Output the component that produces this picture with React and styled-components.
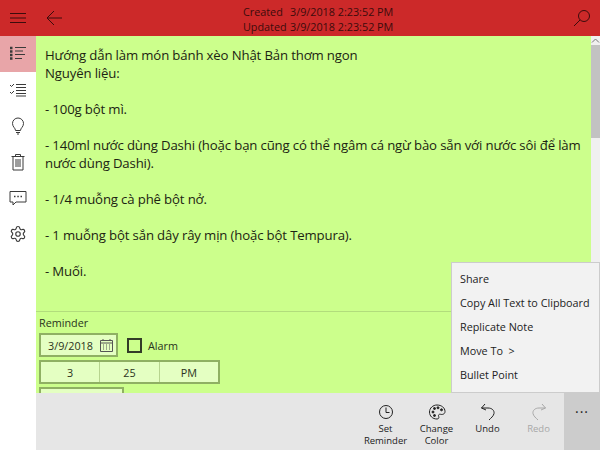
import React from "react";
import styled, { createGlobalStyle } from "styled-components";
import { Settings } from "lucide-react";

const GlobalStyle = createGlobalStyle`
  html, body {
    margin: 0;
    padding: 0;
    height: 100%;
    overflow: hidden;
  }
  *, *::before, *::after {
    box-sizing: border-box;
  }
  body {
    font-family: "Open Sans", "Noto Sans", sans-serif;
    color: #1a1a1a;
  }
`;

const noteLines = [
  "Hướng dẫn làm món bánh xèo Nhật Bản thơm ngon",
  "Nguyên liệu:",
  "",
  "- 100g bột mì.",
  "",
  "- 140ml nước dùng Dashi (hoặc bạn cũng có thể ngâm cá ngừ bào sẵn với nước sôi để làm nước dùng Dashi).",
  "",
  "- 1/4 muỗng cà phê bột nở.",
  "",
  "- 1 muỗng bột sắn dây rây mịn (hoặc bột Tempura).",
  "",
  "- Muối.",
];

const menuItems = ["Share", "Copy All Text to Clipboard", "Replicate Note", "Move To  >", "Bullet Point"];

const Icon = ({ size = 18, children }) => (
  <svg width={size} height={size} viewBox="0 0 18 18" fill="none" stroke="currentColor" strokeWidth="1">
    {children}
  </svg>
);

const App = () => {
  return (
    <>
      <GlobalStyle />
      <Page>
        <TopBar>
          <BarButton>
            <Icon>
              <path d="M1 4.500h16M1 9h16M1 13.500h16" />
            </Icon>
          </BarButton>
          <BarButton>
            <Icon>
              <path d="M2 9h15M9 2 2 9l7 7" />
            </Icon>
          </BarButton>
          <Stamps>
            <StampRow>
              <StampLabel>Created</StampLabel>3/9/2018 2:23:52 PM
            </StampRow>
            <StampRow>
              <StampLabel>Updated</StampLabel>3/9/2018 2:23:52 PM
            </StampRow>
          </Stamps>
          <BarButton>
            <Icon>
              <circle cx="11" cy="7" r="5.500" />
              <path d="M7 11 1 17" />
            </Icon>
          </BarButton>
        </TopBar>
        <Main>
          <SideNav>
            <NavItem $active>
              <Icon>
                <path d="M1 3h2.500M1 6.500h2.500M1 10h2.500M1 13.500h2.500" strokeWidth="2.400" />
                <path d="M6 2.500h11M6 6h8M6 9.500h10M6 13.500h7" />
              </Icon>
            </NavItem>
            <NavItem>
              <Icon>
                <path d="M1 4l1.500 1.500L5 3M1 11l1.500 1.500L5 10" />
                <path d="M7 3.500h10M7 6.500h10M7 9.500h10M7 12.500h10M7 15h10" />
              </Icon>
            </NavItem>
            <NavItem>
              <Icon>
                <path d="M6.500 13.500C6.500 11 3.500 10 3.500 6.500a5.500 5.500 0 0 1 11 0c0 3.500-3 4.500-3 7z" />
                <path d="M7 15.500h4M8 17h2" />
              </Icon>
            </NavItem>
            <NavItem>
              <Icon>
                <path d="M2.500 3.500h13M6.500 3.500V1.500h5v2M4 3.500V17h10V3.500M7 6v8M9 6v8M11 6v8" />
              </Icon>
            </NavItem>
            <NavItem>
              <Icon>
                <path d="M1 2.500h16v10.500H7l-3 3v-3H1z" />
                <path d="M5 7.500h1.500M8.300 7.500h1.500M11.500 7.500H13" strokeWidth="1.600" />
              </Icon>
            </NavItem>
            <NavItem>
              <Settings size={18} strokeWidth={1.500} />
            </NavItem>
          </SideNav>
          <Content>
            <NoteArea>
              <NoteText>
                {noteLines.map((line, i) => (
                  <NoteLine key={i}>{line || "\u00a0"}</NoteLine>
                ))}
              </NoteText>
              <ScrollTrack>
                <ScrollArrow>
                  <svg width="9" height="5" viewBox="0 0 9 5" fill="none" stroke="#777" strokeWidth="1">
                    <path d="M1 4.500 4.500 1 8 4.500" />
                  </svg>
                </ScrollArrow>
                <ScrollThumb />
              </ScrollTrack>
            </NoteArea>
            <ReminderPanel>
              <ReminderLabel>Reminder</ReminderLabel>
              <DateRow>
                <DateField>
                  3/9/2018
                  <svg width="13" height="13" viewBox="0 0 13 13" fill="none" stroke="#555" strokeWidth="1">
                    <path d="M.5 1.500h12v11H.5zM.5 4h12M3 0v2M10 0v2" />
                    <path d="M3 6h1M6 6h1M9 6h1M3 8h1M6 8h1M9 8h1M3 10h1M6 10h1M9 10h1" />
                  </svg>
                </DateField>
                <CheckBox />
                <AlarmLabel>Alarm</AlarmLabel>
              </DateRow>
              <TimeField>
                <TimeCell>3</TimeCell>
                <TimeCell>25</TimeCell>
                <TimeCell>PM</TimeCell>
              </TimeField>
              <CutOffField />
            </ReminderPanel>
          </Content>
        </Main>
        <CommandBar>
          <CommandButton>
            <Icon>
              <circle cx="9" cy="9" r="6.500" />
              <path d="M9 4.500V9.500h3.500" />
            </Icon>
            <CommandLabel>Set Reminder</CommandLabel>
          </CommandButton>
          <CommandButton>
            <Icon>
              <path d="M9 2c4.500 0 8 2.800 8 6.500 0 3-3 3.200-4.500 2.800-1.500-.4-2.500.8-1.800 2.200.6 1.400-.2 2.500-1.700 2.500C4.500 16 1.500 13 1.500 9 1.500 5 5 2 9 2z" />
              <circle cx="5" cy="9" r="1" fill="currentColor" />
              <circle cx="6.500" cy="5.500" r="1" fill="currentColor" />
              <circle cx="10" cy="4.800" r="1" fill="currentColor" />
              <circle cx="13.500" cy="6.800" r="1" fill="currentColor" />
              <circle cx="6.500" cy="12.500" r="1" fill="currentColor" />
            </Icon>
            <CommandLabel>Change Color</CommandLabel>
          </CommandButton>
          <CommandButton>
            <Icon>
              <path d="M6 1 2.500 5 7 7M2.500 5H9c4 0 6.500 2.500 6 5.500-.4 2.500-3 4.500-5 6.500" />
            </Icon>
            <CommandLabel>Undo</CommandLabel>
          </CommandButton>
          <CommandButton $disabled>
            <Icon>
              <path d="M12 1l3.500 4L11 7M15.500 5H9c-4 0-6.500 2.500-6 5.500.4 2.500 3 4.500 5 6.500" />
            </Icon>
            <CommandLabel>Redo</CommandLabel>
          </CommandButton>
          <MoreButton>···</MoreButton>
        </CommandBar>
        <PopupMenu>
          {menuItems.map((item) => (
            <MenuItem key={item}>{item}</MenuItem>
          ))}
        </PopupMenu>
      </Page>
    </>
  );
};

const Page = styled.div`
  position: relative;
  width: 600px;
  height: 450px;
  display: flex;
  flex-direction: column;
  overflow: hidden;
  background: #fff;
`;

const TopBar = styled.div`
  height: 36px;
  flex: none;
  display: flex;
  align-items: center;
  background: #cc2929;
  color: #3c0c0c;
`;

const BarButton = styled.div`
  width: 36px;
  height: 36px;
  flex: none;
  display: flex;
  align-items: center;
  justify-content: center;
`;

const Stamps = styled.div`
  flex: 1;
  padding-left: 171px;
  padding-top: 1px;
  font-size: 10.800px;
  line-height: 15px;
`;

const StampRow = styled.div`
  display: flex;
`;

const StampLabel = styled.span`
  width: 47px;
`;

const Main = styled.div`
  flex: 1;
  min-height: 0;
  display: flex;
`;

const SideNav = styled.div`
  width: 36px;
  flex: none;
  background: #fff;
`;

const NavItem = styled.div`
  height: 36px;
  display: flex;
  align-items: center;
  justify-content: center;
  color: #3a3a3a;
  background: ${(p) => (p.$active ? "#e8a5a8" : "transparent")};
`;

const Content = styled.div`
  flex: 1;
  min-width: 0;
  display: flex;
  flex-direction: column;
  background: #ccff8c;
`;

const NoteArea = styled.div`
  height: 276px;
  flex: none;
  display: flex;
  border-bottom: 1px solid #b2dd7c;
`;

const NoteText = styled.div`
  flex: 1;
  padding: 10px 0 0 9px;
  font-size: 13.200px;
  letter-spacing: -0.150px;
  line-height: 18px;
  color: #1c2412;
`;

const NoteLine = styled.div``;

const ScrollTrack = styled.div`
  width: 9px;
  flex: none;
  background: #f0f0f0;
  display: flex;
  flex-direction: column;
`;

const ScrollArrow = styled.div`
  height: 9px;
  display: flex;
  align-items: center;
  justify-content: center;
`;

const ScrollThumb = styled.div`
  height: 93px;
  background: #c2c2c2;
`;

const ReminderPanel = styled.div`
  padding: 4px 3px 0;
  overflow: hidden;
  flex: 1;
  font-size: 10.800px;
  color: #2a3320;
`;

const ReminderLabel = styled.div`
  line-height: 14px;
  margin-bottom: 3px;
`;

const DateRow = styled.div`
  display: flex;
  align-items: center;
`;

const DateField = styled.div`
  width: 79px;
  height: 24px;
  padding-left: 7px;
  border: 2px solid #8fb063;
  background: #e4ffc2;
  display: flex;
  align-items: center;
  gap: 7px;
`;

const CheckBox = styled.div`
  width: 15px;
  height: 15px;
  margin-left: 9px;
  border: 2px solid #333c28;
`;

const AlarmLabel = styled.span`
  margin-left: 6px;
`;

const TimeField = styled.div`
  width: 181px;
  height: 24px;
  margin-top: 3px;
  display: flex;
  border: 2px solid #8fb063;
  background: #e4ffc2;
`;

const TimeCell = styled.div`
  flex: 1;
  display: flex;
  align-items: center;
  justify-content: center;
  & + & {
    border-left: 1px solid #b7d48f;
  }
`;

const CutOffField = styled.div`
  width: 85px;
  height: 24px;
  margin-top: 3px;
  border: 2px solid #8fb063;
  background: #e4ffc2;
`;

const CommandBar = styled.div`
  height: 57px;
  flex: none;
  margin-left: 36px;
  display: flex;
  justify-content: flex-end;
  background: #e6e6e6;
`;

const CommandButton = styled.div`
  width: 51px;
  padding-top: 10px;
  display: flex;
  flex-direction: column;
  align-items: center;
  color: ${(p) => (p.$disabled ? "#a8a8a8" : "#222")};
`;

const CommandLabel = styled.div`
  margin-top: 2px;
  font-size: 9.500px;
  line-height: 12px;
  text-align: center;
`;

const MoreButton = styled.div`
  width: 36px;
  background: #cccccc;
  font-size: 14px;
  letter-spacing: 1px;
  line-height: 38px;
  text-align: center;
  color: #222;
`;

const PopupMenu = styled.div`
  position: absolute;
  right: 0;
  top: 262px;
  width: 149px;
  height: 131px;
  padding-top: 4px;
  border: 1px solid #ccc;
  background: #f2f2f2;
`;

const MenuItem = styled.div`
  height: 24px;
  padding-left: 8px;
  font-size: 10.800px;
  line-height: 24px;
  color: #222;
  white-space: pre;
`;

export default App;
